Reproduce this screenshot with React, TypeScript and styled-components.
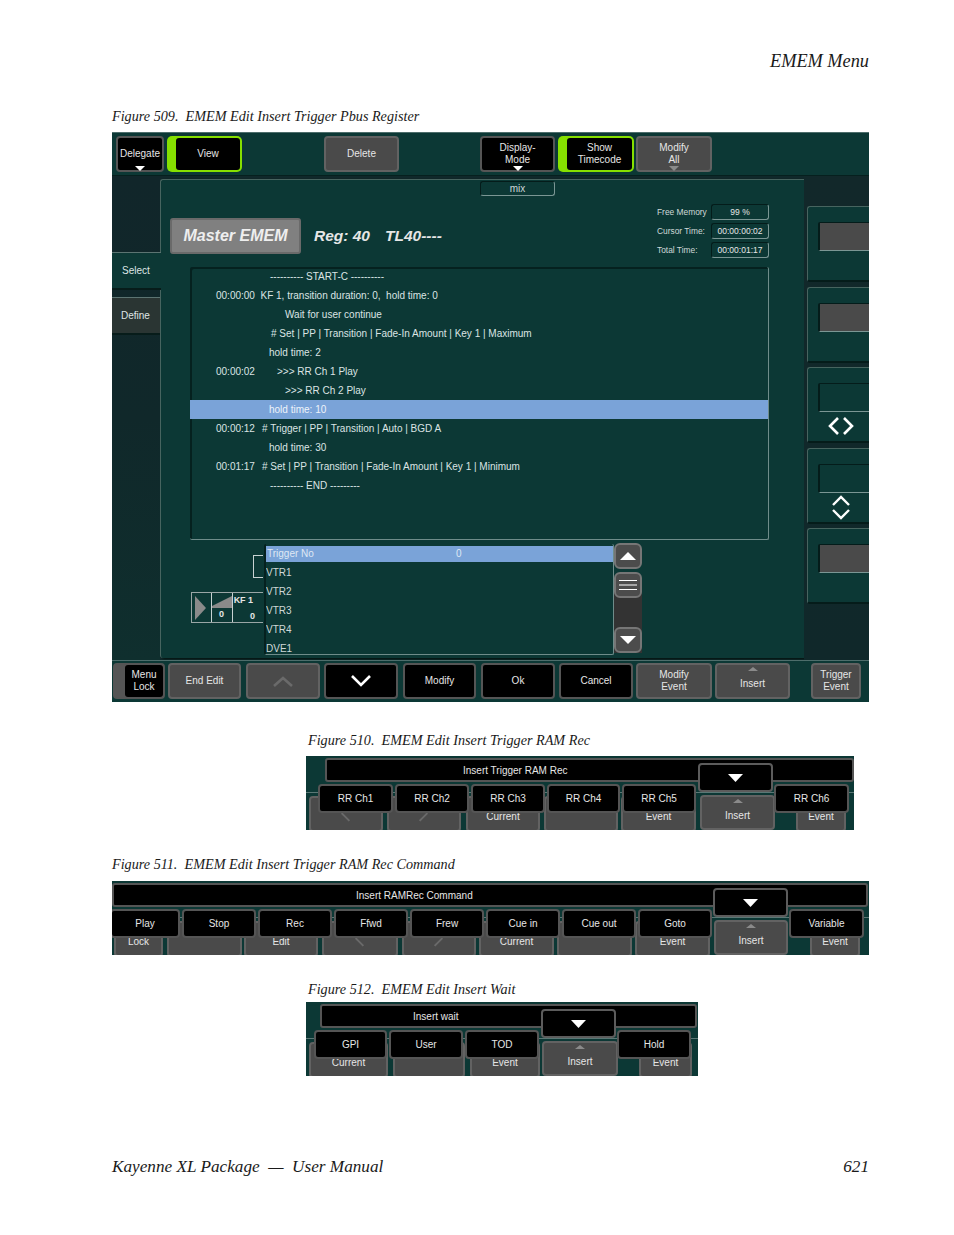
import React from "react";
import styled, { createGlobalStyle } from "styled-components";

const TEAL = "#0c3835";
const UI_FONT = `"Liberation Sans", Arial, sans-serif`;

const logRows = [
  { x: 80, text: "---------- START-C ----------" },
  { x: 26, text: "00:00:00  KF 1, transition duration: 0,  hold time: 0" },
  { x: 95, text: "Wait for user continue" },
  { x: 81, text: "# Set | PP | Transition | Fade-In Amount | Key 1 | Maximum" },
  { x: 79, text: "hold time: 2" },
  { x: 26, time: "00:00:02", timeW: 61, text: ">>> RR Ch 1 Play" },
  { x: 95, text: ">>> RR Ch 2 Play" },
  { x: 79, text: "hold time: 10", active: true },
  { x: 26, time: "00:00:12", timeW: 46, text: "# Trigger | PP | Transition | Auto | BGD A" },
  { x: 79, text: "hold time: 30" },
  { x: 26, time: "00:01:17", timeW: 46, text: "# Set | PP | Transition | Fade-In Amount | Key 1 | Minimum" },
  { x: 80, text: "---------- END ---------" },
];

const triggers = ["VTR1", "VTR2", "VTR3", "VTR4", "DVE1"];

const status = [
  { label: "Free Memory", value: "99 %" },
  { label: "Cursor Time:", value: "00:00:00:02" },
  { label: "Total Time:", value: "00:00:01:17" },
];

type Under = { w: number; ml: number; label?: string; mark?: "back" | "fwd"; insert?: boolean };
type Choice = { label: string; w: number; ml?: number };

const strips: {
  caption: string;
  captionLeft: number;
  top: number;
  gap: number;
  width: number;
  left: number;
  title: string;
  titlePad: number;
  barInset: number;
  barRight: number;
  popupLeft: number;
  down: number;
  under: Under[];
  choices: Choice[];
}[] = [
  {
    caption: "Figure 510.  EMEM Edit Insert Trigger RAM Rec",
    captionLeft: 196,
    top: 30,
    gap: 8,
    width: 548,
    left: 194,
    title: "Insert Trigger RAM Rec",
    titlePad: 136,
    barInset: 7,
    barRight: 0,
    popupLeft: 12,
    down: 392,
    under: [
      { w: 74, ml: 3, mark: "back" },
      { w: 74, ml: 4, mark: "fwd" },
      { w: 74, ml: 5, label: "Current" },
      { w: 74, ml: 4 },
      { w: 75, ml: 3, label: "Event" },
      { w: 75, ml: 4, insert: true },
      { w: 50, ml: 21, label: "Event" },
    ],
    choices: [
      { label: "RR Ch1", w: 75 },
      { label: "RR Ch2", w: 74 },
      { label: "RR Ch3", w: 74 },
      { label: "RR Ch4", w: 73 },
      { label: "RR Ch5", w: 74 },
      { label: "RR Ch6", w: 75, ml: 76 },
    ],
  },
  {
    caption: "Figure 511.  EMEM Edit Insert Trigger RAM Rec Command",
    captionLeft: 0,
    top: 26,
    gap: 9,
    width: 757,
    left: 0,
    title: "Insert RAMRec Command",
    titlePad: 242,
    barInset: 0,
    barRight: 1,
    popupLeft: 0,
    down: 601,
    under: [
      { w: 49, ml: 2, label: "Lock" },
      { w: 75, ml: 4 },
      { w: 74, ml: 2, label: "Edit" },
      { w: 76, ml: 4, mark: "back" },
      { w: 74, ml: 4, mark: "fwd" },
      { w: 75, ml: 3, label: "Current" },
      { w: 75, ml: 3 },
      { w: 75, ml: 3, label: "Event" },
      { w: 74, ml: 4, insert: true },
      { w: 50, ml: 22, label: "Event" },
    ],
    choices: [
      { label: "Play", w: 70, ml: -2 },
      { label: "Stop", w: 74 },
      { label: "Rec", w: 74 },
      { label: "Ffwd", w: 74 },
      { label: "Frew", w: 74 },
      { label: "Cue in", w: 74 },
      { label: "Cue out", w: 74 },
      { label: "Goto", w: 74 },
      { label: "Variable", w: 75, ml: 75 },
    ],
  },
  {
    caption: "Figure 512.  EMEM Edit Insert Wait",
    captionLeft: 196,
    top: 26,
    gap: 5,
    width: 392,
    left: 194,
    title: "Insert wait",
    titlePad: 91,
    barInset: 6,
    barRight: 1,
    popupLeft: 8,
    down: 235,
    under: [
      { w: 79, ml: 3, label: "Current" },
      { w: 72, ml: 5 },
      { w: 70, ml: 5, label: "Event" },
      { w: 76, ml: 2, insert: true },
      { w: 53, ml: 21, label: "Event" },
    ],
    choices: [
      { label: "GPI", w: 73 },
      { label: "User", w: 74 },
      { label: "TOD", w: 74 },
      { label: "Hold", w: 74, ml: 76 },
    ],
  },
];

const Chevron = ({ up }: { up?: boolean }) => (
  <svg width="22" height="14" viewBox="0 0 22 14">
    <path d={up ? "M2 12 L11 4 L20 12" : "M2 2 L11 11 L20 2"} fill="none" stroke={up ? "#6a6a6a" : "#fff"} strokeWidth="2.6" />
  </svg>
);

const App = () => (
  <>
    <GlobalStyle />
    <Page>
      <RunningHead>EMEM Menu</RunningHead>
      <Caption $top={37} $left={0} $gap={8}>Figure 509.  EMEM Edit Insert Trigger Pbus Register</Caption>
      <Screen>
        <TopBar>
          <Key $tone="black" $w={48}>Delegate<CaretDown /></Key>
          <GreenKey $w={75}><span>View</span></GreenKey>
          <Key $tone="gray" $w={75} $ml={79}>Delete</Key>
          <Key $tone="black" $w={75} $ml={78}>{"Display-\nMode"}<CaretDown /></Key>
          <GreenKey $w={76}><span>{"Show\nTimecode"}</span></GreenKey>
          <Key $tone="gray" $w={76} $ml={-1}>{"Modify\nAll"}<CaretDown $dim /></Key>
        </TopBar>
        <LeftColumn>
          <Tab $active>Select</Tab>
          <Tab>Define</Tab>
        </LeftColumn>
        <Panel>
          <MixField>mix</MixField>
          <HeadRow>
            <MasterButton>Master EMEM</MasterButton>
            <RegLabel>Reg: 40</RegLabel>
            <RegLabel>TL40----</RegLabel>
            <StatusColumn>
              {status.map(({ label, value }) => (
                <StatusRow key={label}>
                  <StatusLabel>{label}</StatusLabel>
                  <StatusField>{value}</StatusField>
                </StatusRow>
              ))}
            </StatusColumn>
          </HeadRow>
          <LogBox>
            {logRows.map(({ x, time, timeW, text, active }, index) => (
              <LogRow key={index} $x={x} $active={active}>
                {time && <TimeCell $w={timeW}>{time}</TimeCell>}
                {text}
              </LogRow>
            ))}
          </LogBox>
          <LowerRow>
            <KeyframeBlock>
              <Bracket />
              <KeyframeGrid>
                <KeyframeCell $w={20}>
                  <svg width="14" height="26" viewBox="0 0 14 26">
                    <path d="M1 1 L12 13 L1 25 Z" fill="#8a8a8a" />
                  </svg>
                </KeyframeCell>
                <KeyframeCell $w={21}>
                  <svg width="20" height="12" viewBox="0 0 20 12">
                    <path d="M0 10 L20 0 L20 12 L0 12 Z" fill="#8a8a8a" />
                  </svg>
                  <KeyframeValue>0</KeyframeValue>
                </KeyframeCell>
                <KeyframeCell $w={31}>
                  <KeyframeName>KF 1</KeyframeName>
                  <KeyframeValue $right>0</KeyframeValue>
                </KeyframeCell>
              </KeyframeGrid>
            </KeyframeBlock>
            <TriggerList>
              <TriggerHead>
                <span>Trigger No</span>
                <TriggerZero>0</TriggerZero>
              </TriggerHead>
              {triggers.map((name) => (
                <TriggerRow key={name}>{name}</TriggerRow>
              ))}
            </TriggerList>
            <ScrollBar>
              <ScrollKey>
                <svg width="16" height="8" viewBox="0 0 16 8"><path d="M0 8 L8 0 L16 8 Z" fill="#fff" /></svg>
              </ScrollKey>
              <ScrollKey $grip>
                <svg width="18" height="12" viewBox="0 0 18 12">
                  <path d="M0 1.5 H18 M0 6 H18 M0 10.5 H18" stroke="#fff" strokeWidth="1.2" />
                </svg>
              </ScrollKey>
              <ScrollKey $end>
                <svg width="16" height="8" viewBox="0 0 16 8"><path d="M0 0 L8 8 L16 0 Z" fill="#fff" /></svg>
              </ScrollKey>
            </ScrollBar>
          </LowerRow>
        </Panel>
        <RightColumn>
          <SideCard><SideField $gray /></SideCard>
          <SideCard><SideField $gray /></SideCard>
          <SideCard>
            <SideField />
            <SideIcon>
              <svg width="26" height="20" viewBox="0 0 26 20">
                <path d="M10 2 L2 10 L10 18 M16 2 L24 10 L16 18" fill="none" stroke="#fff" strokeWidth="2.6" />
              </svg>
            </SideIcon>
          </SideCard>
          <SideCard>
            <SideField />
            <SideIcon $tight>
              <svg width="20" height="25" viewBox="0 0 20 25">
                <path d="M2 10 L10 2 L18 10 M2 15 L10 23 L18 15" fill="none" stroke="#fff" strokeWidth="2.4" />
              </svg>
            </SideIcon>
          </SideCard>
          <SideCard><SideField $gray /></SideCard>
        </RightColumn>
        <BottomBar>
          <MenuLock><span>{"Menu\nLock"}</span></MenuLock>
          <Key $tone="gray" $w={73} $ml={3}>End Edit</Key>
          <Key $tone="gray" $w={74} $ml={5}><Chevron up /></Key>
          <Key $tone="black" $w={74} $ml={4}><Chevron /></Key>
          <Key $tone="black" $w={73} $ml={5}>Modify</Key>
          <Key $tone="black" $w={74} $ml={5}>Ok</Key>
          <Key $tone="black" $w={74} $ml={4}>Cancel</Key>
          <Key $tone="gray" $w={76} $ml={3}>{"Modify\nEvent"}</Key>
          <Key $tone="gray" $w={75} $ml={3} $start><CaretUp />Insert</Key>
          <Key $tone="gray" $w={50} $ml={21}>{"Trigger\nEvent"}</Key>
        </BottomBar>
      </Screen>
      {strips.map((strip) => (
        <React.Fragment key={strip.caption}>
          <Caption $top={strip.top} $left={strip.captionLeft} $gap={strip.gap}>{strip.caption}</Caption>
          <Strip $w={strip.width} $left={strip.left}>
            <UnderRow>
              {strip.under.map((item, index) =>
                item.insert ? (
                  <InsertKey key={index} $w={item.w} $ml={item.ml}>
                    <CaretUp />Insert
                  </InsertKey>
                ) : (
                  <UnderKey key={index} $w={item.w} $ml={item.ml}>
                    {item.label}
                    {item.mark && <Stroke $fwd={item.mark === "fwd"} />}
                  </UnderKey>
                )
              )}
            </UnderRow>
            <Popup $inset={strip.popupLeft}>
              <TitleBar $inset={strip.barInset} $right={strip.barRight} $pad={strip.titlePad}>
                {strip.title}
              </TitleBar>
              <ChoiceRow>
                {strip.choices.map(({ label, w, ml }) => (
                  <Choice key={label} $w={w} $ml={ml}>{label}</Choice>
                ))}
              </ChoiceRow>
            </Popup>
            <DownKey $left={strip.down}>
              <svg width="15" height="8" viewBox="0 0 15 8"><path d="M0 0 L7.5 8 L15 0 Z" fill="#fff" /></svg>
            </DownKey>
          </Strip>
        </React.Fragment>
      ))}
      <Footer>
        <span>Kayenne XL Package  —  User Manual</span>
        <span>621</span>
      </Footer>
    </Page>
  </>
);

export default App;

const GlobalStyle = createGlobalStyle`
  body {
    margin: 0;
    background: #fff;
  }
`;

const Page = styled.div`
  box-sizing: border-box;
  width: 954px;
  height: 1235px;
  padding: 51px 85px 0 112px;
  font-family: "Liberation Serif", "Times New Roman", serif;
  font-style: italic;
  color: #1a1a1a;
`;

const RunningHead = styled.div`
  font-size: 18.3px;
  line-height: 20px;
  text-align: right;
`;

const Caption = styled.div<{ $top: number; $left: number; $gap: number }>`
  margin: ${(p) => p.$top}px 0 ${(p) => p.$gap}px ${(p) => p.$left}px;
  font-size: 14.2px;
  line-height: 16px;
  white-space: pre;
`;

const Screen = styled.div`
  display: grid;
  grid-template-columns: 48px 644px 65px;
  grid-template-rows: 44px 484px 42px;
  width: 757px;
  height: 570px;
  background: #10282a;
  font-family: ${UI_FONT};
  font-style: normal;
  font-size: 10px;
  color: #e6e6e6;
  overflow: hidden;
`;

const TopBar = styled.div`
  grid-column: 1 / 4;
  box-sizing: border-box;
  display: flex;
  gap: 3px;
  padding: 3px 0 0 4px;
  background: ${TEAL};
  border-top: 1px solid #4d6d6b;
  border-bottom: 1px solid #06201e;
`;

const Key = styled.div<{ $tone: "gray" | "black"; $w: number; $ml?: number; $start?: boolean }>`
  position: relative;
  box-sizing: border-box;
  display: flex;
  flex-direction: column;
  align-items: center;
  justify-content: ${(p) => (p.$start ? "flex-start" : "center")};
  flex: none;
  width: ${(p) => p.$w}px;
  height: 36px;
  margin-left: ${(p) => p.$ml ?? 0}px;
  padding-top: ${(p) => (p.$start ? 2 : 0)}px;
  border: 2px solid ${(p) => (p.$tone === "black" ? "#555" : "#626262")};
  border-radius: 4px;
  background: ${(p) => (p.$tone === "black" ? "#000" : "#4a4a4a")};
  line-height: 12px;
  text-align: center;
  white-space: pre-line;
`;

const GreenKey = styled.div<{ $w: number }>`
  box-sizing: border-box;
  flex: none;
  display: flex;
  width: ${(p) => p.$w}px;
  height: 36px;
  padding: 2px 2px 2px 9px;
  border-radius: 5px;
  background: #86e000;
  span {
    flex: 1;
    display: flex;
    align-items: center;
    justify-content: center;
    border-radius: 3px;
    background: #000;
    line-height: 12px;
    text-align: center;
    white-space: pre-line;
  }
`;

const CaretDown = styled.i<{ $dim?: boolean }>`
  position: absolute;
  bottom: -1px;
  left: 50%;
  margin-left: -5px;
  border: solid transparent;
  border-width: 5px 5px 0;
  border-top-color: ${(p) => (p.$dim ? "#8a8a8a" : "#fff")};
`;

const CaretUp = styled.i`
  display: block;
  margin-bottom: 7px;
  border: solid transparent;
  border-width: 0 5px 4px;
  border-bottom-color: #8a8a8a;
`;

const LeftColumn = styled.div`
  display: flex;
  flex-direction: column;
  gap: 7px;
  padding-top: 76px;
  background: linear-gradient(180deg, #11262a 0%, #10282a 50%, #0f2f2e 100%);
`;

const Tab = styled.div<{ $active?: boolean }>`
  position: relative;
  z-index: ${(p) => (p.$active ? 1 : 0)};
  box-sizing: border-box;
  height: 38px;
  margin-right: ${(p) => (p.$active ? -1 : 0)}px;
  padding-top: 12px;
  padding-left: ${(p) => (p.$active ? 10 : 9)}px;
  background: ${(p) => (p.$active ? TEAL : "#2a3533")};
  border-top: 1px solid #5c7472;
  border-bottom: 2px solid #071c1a;
  color: #dfe6e5;
`;

const Panel = styled.div`
  box-sizing: border-box;
  margin: 3px 0 2px;
  background: ${TEAL};
  border-top: 1px solid #47645f;
  border-left: 1px solid #47645f;
  border-radius: 3px 0 0 3px;
  box-shadow: 2px 1px 2px #04140f;
`;

const MixField = styled.div`
  box-sizing: border-box;
  width: 75px;
  height: 15px;
  margin: 1px 0 0 319px;
  border-radius: 3px;
  border-top: 1px solid #041c1a;
  border-left: 1px solid #041c1a;
  border-right: 1px solid #7b9694;
  border-bottom: 1px solid #7b9694;
  line-height: 13px;
  text-align: center;
  color: #cdd6d6;
`;

const HeadRow = styled.div`
  display: flex;
  align-items: flex-end;
  height: 54px;
  margin-top: 8px;
  padding: 0 35px 0 9px;
`;

const MasterButton = styled.div`
  box-sizing: border-box;
  width: 131px;
  height: 36px;
  margin-bottom: 4px;
  border: 2px solid #6a6a6a;
  border-radius: 3px;
  background: #808080;
  font-size: 16px;
  font-weight: bold;
  font-style: italic;
  line-height: 32px;
  text-align: center;
  color: #eee;
`;

const RegLabel = styled.div`
  width: 71px;
  margin: 0 0 13px 13px;
  font-size: 15.5px;
  font-weight: bold;
  font-style: italic;
  line-height: 18px;
  white-space: pre;
  & + & {
    margin-left: 0;
  }
`;

const StatusColumn = styled.div`
  display: flex;
  flex-direction: column;
  gap: 3px;
  margin-left: auto;
`;

const StatusRow = styled.div`
  display: flex;
  align-items: center;
`;

const StatusLabel = styled.div`
  width: 54px;
  font-size: 8.4px;
  color: #cfd8d8;
`;

const StatusField = styled.div`
  box-sizing: border-box;
  width: 58px;
  height: 16px;
  border-radius: 3px;
  border-top: 1px solid #041c1a;
  border-left: 1px solid #041c1a;
  border-right: 1px solid #7b9694;
  border-bottom: 1px solid #7b9694;
  font-size: 8.5px;
  line-height: 14px;
  text-align: center;
`;

const LogBox = styled.div`
  box-sizing: border-box;
  height: 273px;
  margin: 9px 35px 0 29px;
  border-right: 1px solid #6f8c8a;
  border-bottom: 1px solid #6f8c8a;
  border-radius: 2px;
  box-shadow: inset 2px 2px 0 #05211f;
`;

const LogRow = styled.div<{ $x: number; $active?: boolean }>`
  display: flex;
  height: 19px;
  padding-left: ${(p) => p.$x}px;
  background: ${(p) => (p.$active ? "#7aa3d8" : "transparent")};
  font-size: 10px;
  line-height: 20px;
  color: ${(p) => (p.$active ? "#eef3fa" : "#dbe4e4")};
  white-space: pre;
`;

const TimeCell = styled.span<{ $w?: number }>`
  width: ${(p) => p.$w}px;
`;

const LowerRow = styled.div`
  display: flex;
  align-items: flex-start;
  margin-top: 4px;
`;

const KeyframeBlock = styled.div`
  width: 72px;
  margin-left: 30px;
`;

const Bracket = styled.div`
  box-sizing: border-box;
  width: 10px;
  height: 23px;
  margin: 11px 0 0 62px;
  border: 1px solid #c8d2d2;
  border-right: 0;
`;

const KeyframeGrid = styled.div`
  display: flex;
  height: 29px;
  margin-top: 14px;
  border: 1px solid #9aa6a6;
  border-right: 0;
`;

const KeyframeCell = styled.div<{ $w: number }>`
  position: relative;
  box-sizing: border-box;
  display: flex;
  flex-direction: column;
  align-items: center;
  justify-content: center;
  width: ${(p) => p.$w}px;
  border-right: 1px solid #c8d2d2;
  &:last-child {
    border-right: 0;
  }
`;

const KeyframeValue = styled.div<{ $right?: boolean }>`
  align-self: ${(p) => (p.$right ? "flex-end" : "center")};
  margin-right: ${(p) => (p.$right ? 8 : 0)}px;
  font-size: 9px;
  font-weight: bold;
  line-height: 12px;
`;

const KeyframeName = styled.div`
  align-self: flex-start;
  margin-left: 1px;
  font-size: 9px;
  font-weight: bold;
  line-height: 12px;
  margin-bottom: 4px;
`;

const TriggerList = styled.div`
  box-sizing: border-box;
  width: 350px;
  height: 111px;
  margin-left: 1px;
  padding-top: 2px;
  border-left: 2px solid #05211f;
  border-right: 1px solid #6f8c8a;
  border-bottom: 1px solid #6f8c8a;
  border-radius: 2px;
  overflow: hidden;
`;

const TriggerHead = styled.div`
  display: flex;
  height: 16px;
  padding-left: 1px;
  background: #7aa3d8;
  line-height: 15px;
  color: #dfe8f4;
`;

const TriggerZero = styled.span`
  margin-left: 142px;
`;

const TriggerRow = styled.div`
  height: 19px;
  line-height: 21px;
  color: #cfd8d8;
`;

const ScrollBar = styled.div`
  display: flex;
  flex-direction: column;
  width: 28px;
  height: 110px;
  margin-top: -1px;
  background: linear-gradient(180deg, ${TEAL} 0 40px, #333 40px);
`;

const ScrollKey = styled.div<{ $grip?: boolean; $end?: boolean }>`
  box-sizing: border-box;
  display: flex;
  align-items: center;
  justify-content: center;
  flex: none;
  height: 26px;
  margin-top: ${(p) => (p.$end ? 29 : p.$grip ? 3 : 0)}px;
  border: 2px solid #767676;
  border-radius: 6px;
  background: #4c4c4c;
`;

const RightColumn = styled.div`
  display: flex;
  flex-direction: column;
  gap: 4.5px;
  padding: 30px 0 0 3px;
  background: linear-gradient(180deg, #12282a 0%, #10282a 100%);
`;

const SideCard = styled.div`
  box-sizing: border-box;
  flex: none;
  height: 76px;
  padding: 15px 0 0 10px;
  background: ${TEAL};
  border-top: 1px solid #47645f;
  border-left: 1px solid #47645f;
  border-bottom: 2px solid #051c1a;
  border-radius: 3px 0 0 3px;
`;

const SideField = styled.div<{ $gray?: boolean }>`
  height: 27px;
  background: ${(p) => (p.$gray ? "#4a4a4a" : TEAL)};
  border-top: 1px solid #041c1a;
  border-left: 2px solid #041c1a;
  border-bottom: 1px solid #7b9694;
  border-radius: 2px 0 0 2px;
`;

const SideIcon = styled.div<{ $tight?: boolean }>`
  display: flex;
  justify-content: center;
  margin: ${(p) => (p.$tight ? 2 : 4)}px 5px 0 0;
`;

const BottomBar = styled.div`
  grid-column: 1 / 4;
  box-sizing: border-box;
  display: flex;
  padding: 2px 0 0 1px;
  background: ${TEAL};
  border-top: 1px solid #4d6d6b;
  line-height: 12px;
`;

const MenuLock = styled.div`
  box-sizing: border-box;
  display: flex;
  flex: none;
  width: 52px;
  height: 36px;
  padding: 2px 2px 2px 12px;
  border-radius: 4px;
  background: #555;
  span {
    flex: 1;
    display: flex;
    align-items: center;
    justify-content: center;
    border-radius: 3px;
    background: #000;
    text-align: center;
    white-space: pre-line;
  }
`;

const Strip = styled.div<{ $w: number; $left: number }>`
  position: relative;
  width: ${(p) => p.$w}px;
  height: 74px;
  margin-left: ${(p) => p.$left}px;
  background: ${TEAL};
  font-family: ${UI_FONT};
  font-style: normal;
  font-size: 10px;
  color: #e6e6e6;
  overflow: hidden;
`;

const UnderRow = styled.div`
  position: absolute;
  top: 36px;
  left: 0;
  right: 0;
  box-sizing: border-box;
  display: flex;
  height: 38px;
  padding-top: 3px;
  border-top: 1px solid #5a7775;
`;

const UnderKey = styled.div<{ $w: number; $ml: number }>`
  position: relative;
  box-sizing: border-box;
  flex: none;
  width: ${(p) => p.$w}px;
  height: 36px;
  margin-left: ${(p) => p.$ml}px;
  padding-top: 13px;
  border: 2px solid #626262;
  border-radius: 4px;
  background: #4a4a4a;
  line-height: 12px;
  text-align: center;
`;

const Stroke = styled.i<{ $fwd?: boolean }>`
  position: absolute;
  top: 18px;
  left: 50%;
  width: 11px;
  height: 2px;
  margin-left: -6px;
  background: #6a6a6a;
  transform: rotate(${(p) => (p.$fwd ? -45 : 45)}deg);
`;

const InsertKey = styled.div<{ $w: number; $ml: number }>`
  box-sizing: border-box;
  display: flex;
  flex-direction: column;
  align-items: center;
  flex: none;
  width: ${(p) => p.$w}px;
  height: 35px;
  margin: -1px 0 0 ${(p) => p.$ml}px;
  padding-top: 2px;
  border: 2px solid #626262;
  border-radius: 4px;
  background: #4a4a4a;
  line-height: 12px;
`;

const Popup = styled.div<{ $inset: number }>`
  position: absolute;
  top: 2px;
  left: ${(p) => p.$inset}px;
  right: 0;
`;

const TitleBar = styled.div<{ $inset: number; $right: number; $pad: number }>`
  box-sizing: border-box;
  height: 24px;
  margin: 0 ${(p) => p.$right}px 0 ${(p) => p.$inset}px;
  padding-left: ${(p) => p.$pad}px;
  border: 2px solid #555;
  border-radius: 3px;
  background: #000;
  line-height: 22px;
`;

const ChoiceRow = styled.div`
  display: flex;
  gap: 2px;
  margin-top: 2px;
`;

const Choice = styled.div<{ $w: number; $ml?: number }>`
  box-sizing: border-box;
  flex: none;
  width: ${(p) => p.$w}px;
  height: 29px;
  margin-left: ${(p) => p.$ml ?? 0}px;
  border: 2px solid #555;
  border-radius: 4px;
  background: #000;
  line-height: 26px;
  text-align: center;
`;

const DownKey = styled.div<{ $left: number }>`
  position: absolute;
  top: 7px;
  left: ${(p) => p.$left}px;
  box-sizing: border-box;
  display: flex;
  align-items: center;
  justify-content: center;
  width: 75px;
  height: 29px;
  border: 2px solid #5c5c5c;
  border-radius: 4px;
  background: #000;
`;

const Footer = styled.div`
  display: flex;
  justify-content: space-between;
  margin-top: 81px;
  font-size: 17.2px;
  line-height: 20px;
  white-space: pre;
`;
